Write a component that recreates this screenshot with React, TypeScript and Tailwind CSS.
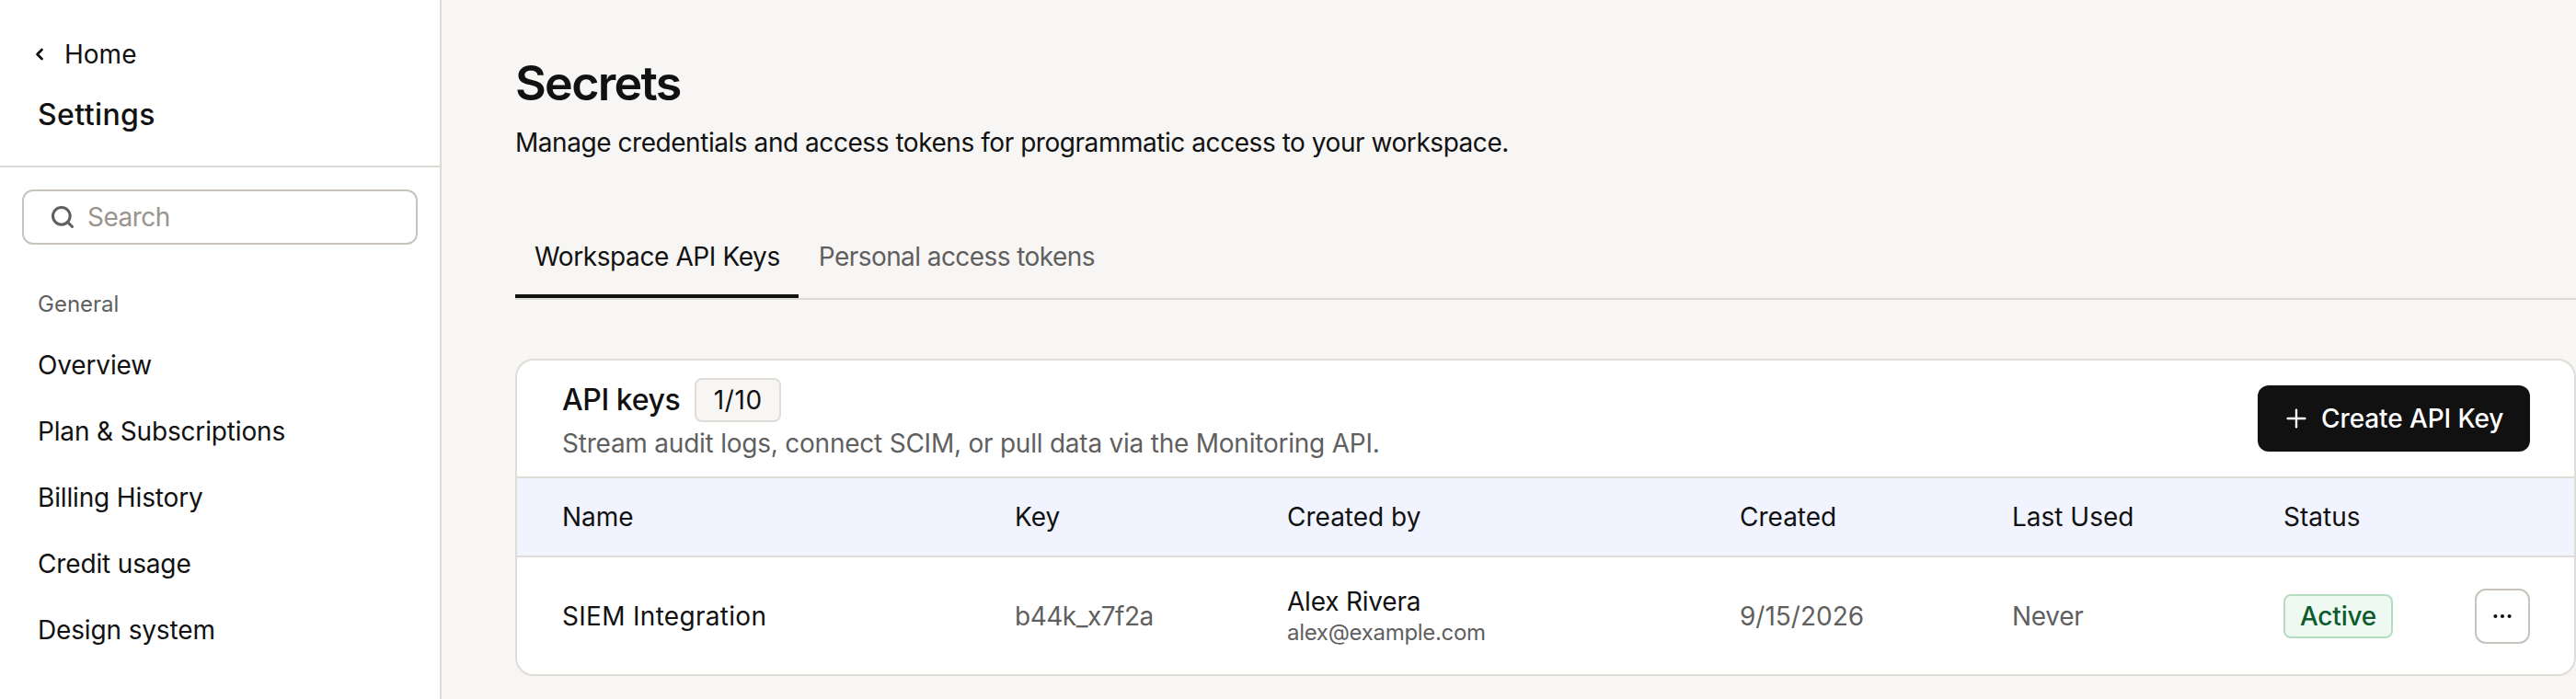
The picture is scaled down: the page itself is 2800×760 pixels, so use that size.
import { ChevronLeft, Ellipsis, Plus, Search } from 'lucide-react';

const navItems = ['Overview', 'Plan & Subscriptions', 'Billing History', 'Credit usage', 'Design system'];
const columns = ['Name', 'Key', 'Created by', 'Created', 'Last Used', 'Status'];
const gridCols = 'grid grid-cols-[492px_296px_492px_296px_295px_1fr] items-center pl-[49px] pr-[48px]';

function Sidebar() {
  return (
    <aside className="w-[480px] shrink-0 border-r-2 border-[#dedad6] bg-white">
      <div className="h-[182px] border-b-2 border-[#dedad6] pt-[41px]">
        <div className="flex items-center pl-[33px] text-[28px] leading-[36px] text-[#111111]">
          <ChevronLeft size={20} strokeWidth={3.2} />
          <span className="ml-[17px]">Home</span>
        </div>
        <div className="mt-[28px] pl-[41px] text-[32px] font-medium leading-[40px] tracking-[0.4px] text-[#111111]">Settings</div>
      </div>
      <div className="mx-[24px] mt-[24px] flex h-[60px] items-center rounded-[12px] border-2 border-[#c8c3bd] pl-[28px]">
        <Search size={28} strokeWidth={2.6} className="text-[#5f5f5f]" />
        <span className="ml-[13px] text-[28px] tracking-[-0.5px] text-[#9a948e]">Search</span>
      </div>
      <div className="mt-[49px] pl-[41px] text-[24px] leading-[32px] text-[#5f5f5f]">General</div>
      <nav className="mt-[14px]">
        {navItems.map((item) => (
          <div key={item} className="flex h-[72px] items-center pl-[41px] text-[28px] tracking-[-0.15px] text-[#111111]">
            {item}
          </div>
        ))}
      </nav>
    </aside>
  );
}

function ApiKeysCard() {
  return (
    <section className="mt-[64px] rounded-[20px] border-2 border-[#e0dcd7] bg-white">
      <div className="flex h-[126px] items-center justify-between pl-[49px] pr-[48px]">
        <div>
          <div className="flex h-[48px] items-center">
            <span className="text-[32px] font-medium tracking-[-0.4px] text-[#111111]">API keys</span>
            <span className="ml-[16px] flex h-[48px] w-[94px] items-center justify-center rounded-[8px] border-2 border-[#e0dcd7] bg-[#f7f6f4] text-[28px] tracking-[0.6px] text-[#111111]">
              1/10
            </span>
          </div>
          <div className="mt-[5px] text-[28px] leading-[36px] tracking-[-0.23px] text-[#5f5f5f]">
            Stream audit logs, connect SCIM, or pull data via the Monitoring API.
          </div>
        </div>
        <button className="flex h-[72px] w-[296px] items-center rounded-[12px] bg-[#111111] pl-[26px] text-[28px] font-medium tracking-[-0.1px] text-white">
          <Plus size={32} strokeWidth={1.8} />
          <span className="ml-[11px]">Create API Key</span>
        </button>
      </div>
      <div className={`${gridCols} h-[88px] border-y-2 border-[#e0dcd7] bg-[#f1f3fe] text-[28px] text-[#111111]`}>
        {columns.map((col) => (
          <div key={col}>{col}</div>
        ))}
      </div>
      <div className={`${gridCols} h-[127px] text-[28px] text-[#5f5f5f]`}>
        <div className="tracking-[0.3px] text-[#111111]">SIEM Integration</div>
        <div className="tracking-[-0.5px]">b44k_x7f2a</div>
        <div>
          <div className="leading-[36px] tracking-[-0.2px] text-[#111111]">Alex Rivera</div>
          <div className="text-[24px] leading-[32px] tracking-[-0.3px]">alex@example.com</div>
        </div>
        <div>9/15/2026</div>
        <div className="tracking-[-0.3px]">Never</div>
        <div className="flex items-center justify-between">
          <span className="flex h-[48px] w-[119px] items-center justify-center rounded-[8px] border-2 border-[#b5dcbe] bg-[#eefaf1] font-medium tracking-[-0.2px] text-[#0f5a2e]">
            Active
          </span>
          <button className="flex h-[60px] w-[60px] items-center justify-center rounded-[12px] border-2 border-[#c8c3bd] bg-white text-[#111111]">
            <Ellipsis size={26} strokeWidth={1.8} />
          </button>
        </div>
      </div>
    </section>
  );
}

export default function App() {
  return (
    <div className="flex h-[760px] w-[2800px] overflow-hidden bg-[#f7f6f4] font-['Inter',sans-serif]">
      <Sidebar />
      <main className="flex-1 pl-[80px] pt-[59px]">
        <h1 className="text-[52px] font-semibold leading-[64px] tracking-[-1.7px] text-[#111111]">Secrets</h1>
        <p className="mt-[12px] text-[28px] leading-[40px] tracking-[-0.45px] text-[#111111]">
          Manage credentials and access tokens for programmatic access to your workspace.
        </p>
        <div className="mt-[84px] flex border-b-2 border-[#dedad6] text-[28px] leading-[40px]">
          <div className="border-b-4 border-[#111111] pb-[21px] pl-[21px] pr-[20px] tracking-[-0.4px] text-[#111111]">
            Workspace API Keys
          </div>
          <div className="pb-[21px] pl-[22px] tracking-[-0.57px] text-[#5f5f5f]">Personal access tokens</div>
        </div>
        <ApiKeysCard />
      </main>
    </div>
  );
}
